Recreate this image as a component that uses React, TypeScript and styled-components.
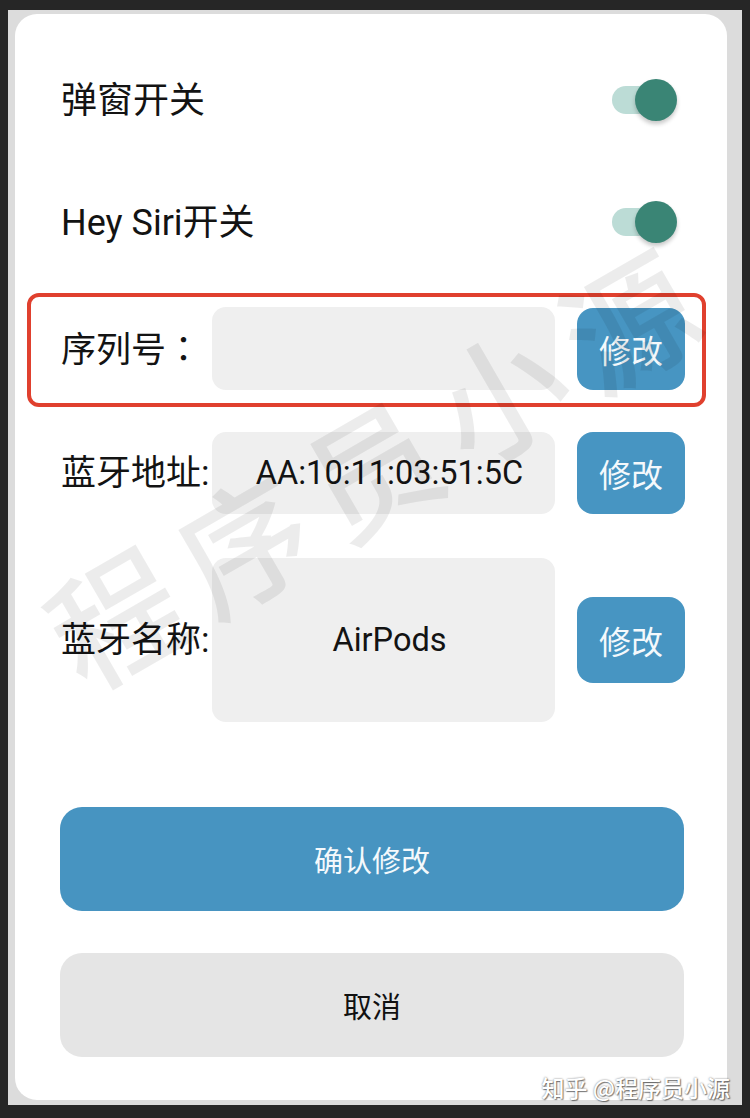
import React from "react";
import styled, { createGlobalStyle } from "styled-components";

const Global = createGlobalStyle`
  html, body { margin: 0; padding: 0; background: #262626; }
  body { font-family: Roboto, "Noto Sans CJK SC", sans-serif; }
  * { box-sizing: border-box; }
`;

const Page = styled.div`
  position: relative;
  width: 750px;
  height: 1118px;
  background: #262626;
  padding: 10px 8px 13px 8px;
`;

const Panel = styled.div`
  height: 100%;
  background: #dcdcdc;
  padding: 4px 15px 5px 7px;
  display: flex;
`;

const Card = styled.div`
  position: relative;
  flex: 1;
  background: #ffffff;
  border-radius: 22px;
  padding: 25px 42px 0 46px;
  display: flex;
  flex-direction: column;
`;

const ToggleRow = styled.div`
  height: 122px;
  display: flex;
  align-items: center;
  justify-content: space-between;
  padding-right: 8px;
`;

const Title = styled.span`
  font-size: 36px;
  color: #131313;
  line-height: 1;
  padding-top: 2px;
`;

const Switch = styled.div`
  display: flex;
  align-items: center;
`;

const Track = styled.div`
  width: 54px;
  height: 28px;
  border-radius: 14px;
  background: #bcdcd6;
`;

const Knob = styled.div`
  width: 42px;
  height: 42px;
  border-radius: 50%;
  margin-left: -31px;
  background: #3a8575;
  box-shadow: 0 3px 4px rgba(0, 0, 0, 0.22);
`;

const FieldRow = styled.div<{ $mt: number; $highlight?: boolean }>`
  margin-top: ${(p) => p.$mt}px;
  display: grid;
  grid-template-columns: 151px 1fr 108px;
  align-items: center;
  ${(p) =>
    p.$highlight
      ? `
    margin-left: -34px;
    margin-right: -21px;
    padding: 10px 17px 13px 30px;
    border: 4px solid #e0402e;
    border-radius: 12px;
  `
      : ""}
`;

const Label = styled.span`
  font-size: 35px;
  color: #131313;
  line-height: 1;
  white-space: nowrap;
`;

const Colon = styled.span`
  font-family: "Noto Sans CJK JP", sans-serif;
`;

const Field = styled.div<{ $h: number }>`
  height: ${(p) => p.$h}px;
  margin-right: 22px;
  background: #efefef;
  border-radius: 14px;
  display: flex;
  align-items: center;
  justify-content: center;
  padding-left: 12px;
  font-size: 32.5px;
  color: #131313;
  white-space: nowrap;
`;

const EditButton = styled.button<{ $h: number }>`
  height: ${(p) => p.$h}px;
  border: none;
  border-radius: 16px;
  background: #4795c2;
  color: #f4f9fc;
  font-family: "Noto Sans CJK SC", sans-serif;
  font-size: 32px;
  padding: 0;
  display: flex;
  align-items: center;
  justify-content: center;
`;

const WideButton = styled.button<{ $mt: number; $primary?: boolean }>`
  margin-top: ${(p) => p.$mt}px;
  height: 104px;
  width: 100%;
  margin-left: -1px;
  border: none;
  border-radius: 22px;
  background: ${(p) => (p.$primary ? "#4794c1" : "#e5e5e5")};
  color: ${(p) => (p.$primary ? "#f4f9fc" : "#111111")};
  font-family: "Noto Sans CJK SC", sans-serif;
  font-size: 29px;
  display: flex;
  align-items: center;
  justify-content: center;
  padding: 0;
`;

const Watermark = styled.div`
  position: absolute;
  left: 362px;
  top: 446px;
  transform: translate(-50%, -50%) rotate(-30deg);
  font-family: "Noto Sans CJK SC", sans-serif;
  font-weight: 500;
  font-size: 130px;
  letter-spacing: 18px;
  line-height: 1;
  color: rgba(0, 0, 0, 0.075);
  white-space: nowrap;
  pointer-events: none;
  z-index: 2;
`;

const Credit = styled.div`
  position: absolute;
  right: 20px;
  bottom: 19px;
  font-family: "Noto Sans CJK SC", sans-serif;
  font-size: 23px;
  font-weight: 500;
  line-height: 1;
  color: #ffffff;
  white-space: nowrap;
  text-shadow: 0 0 2px rgba(0, 0, 0, 0.55), 1px 1px 1px rgba(0, 0, 0, 0.45);
`;

const Toggle = ({ label }: { label: string }) => (
  <ToggleRow>
    <Title>{label}</Title>
    <Switch>
      <Track />
      <Knob />
    </Switch>
  </ToggleRow>
);

export default function App() {
  return (
    <>
      <Global />
      <Page>
        <Panel>
          <Card>
            <Toggle label="弹窗开关" />
            <Toggle label="Hey Siri开关" />
            <FieldRow $mt={10} $highlight>
              <Label>
                序列号<Colon>：</Colon>
              </Label>
              <Field $h={83} />
              <EditButton $h={82}>修改</EditButton>
            </FieldRow>
            <FieldRow $mt={25}>
              <Label>蓝牙地址:</Label>
              <Field $h={82}>AA:10:11:03:51:5C</Field>
              <EditButton $h={82}>修改</EditButton>
            </FieldRow>
            <FieldRow $mt={44}>
              <Label>蓝牙名称:</Label>
              <Field $h={164}>AirPods</Field>
              <EditButton $h={86}>修改</EditButton>
            </FieldRow>
            <WideButton $mt={85} $primary>
              确认修改
            </WideButton>
            <WideButton $mt={42}>取消</WideButton>
            <Watermark>程序员小源</Watermark>
          </Card>
        </Panel>
        <Credit>知乎 @程序员小源</Credit>
      </Page>
    </>
  );
}
